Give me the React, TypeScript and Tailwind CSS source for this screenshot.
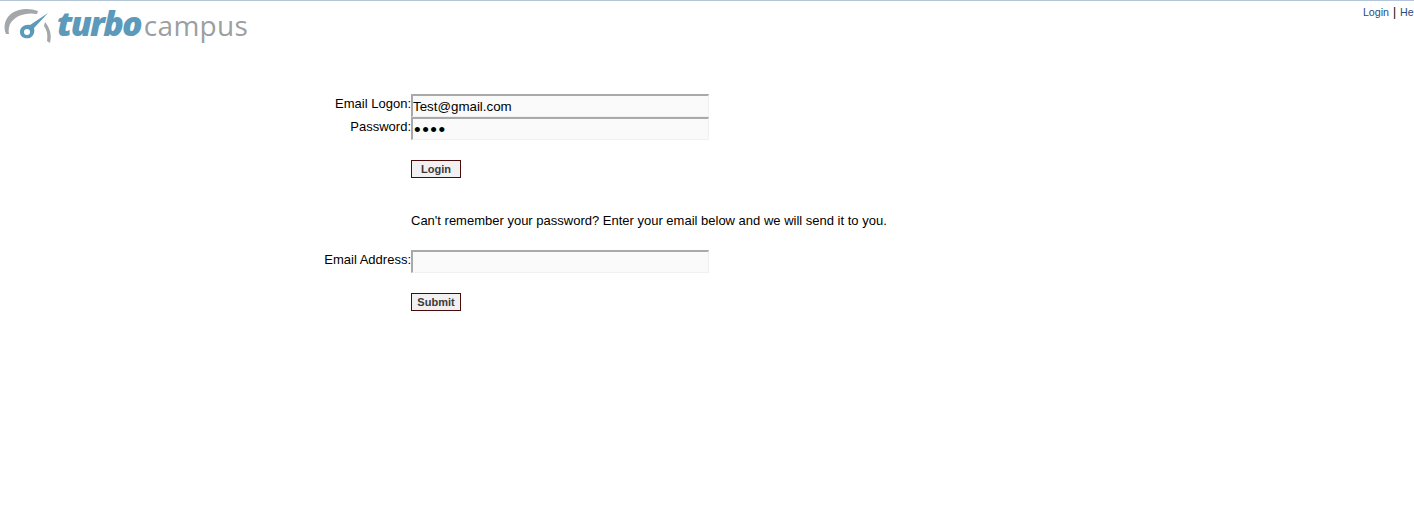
import React from "react";

const fieldClass =
  "w-[298px] h-[23px] bg-[#fafafa] border-t-2 border-l-2 border-r border-b border-t-[#a9a9a9] border-l-[#a9a9a9] border-r-[#f0f0f0] border-b-[#f0f0f0] px-0 text-[13.33px] text-black outline-none";
const buttonClass =
  "block w-[50px] h-[18px] bg-[#f2f0f0] border border-[#4a0a0a] text-[11px] font-bold text-[#3a3a3a] leading-none";
const labelClass = "text-right text-[13px] text-black leading-[15px] pt-[2px]";

const Logo = () => (
  <div className="flex items-start">
    <svg width="57" height="44" viewBox="0 1 57 44" fill="none" className="shrink-0">
      {/* gauge rim */}
      <path d="M6 34 C2 24 7 13 19 10 C26 8 32 9 38 11 L37 14 C27 12 15 15 10 24 C9 27 8 31 9 34 Z" fill="#a3a7aa" />
      <path d="M45 22 C50 28 52 35 50 43 L47 41 C48 35 47 30 44 26 Z" fill="#a3a7aa" />
      {/* needle and hub */}
      <path d="M48 13 L30 25 C25 24 20 27 20 32 C20 38 26 39 30 38 C34 36 35 31 34 28 Z" fill="#5b9aba" />
      <circle cx="27" cy="32" r="3" fill="#ffffff" />
    </svg>
    <div className="flex items-baseline font-['Open_Sans',sans-serif] leading-[44px]">
      <span className="text-[34px] font-extrabold italic text-[#5b9aba] tracking-[-1.8px]">turbo</span>
      <span className="ml-[3px] text-[28px] font-medium text-[#9b9fa2] tracking-[0.3px]">campus</span>
    </div>
  </div>
);

export default function App() {
  return (
    <div className="h-[512px] overflow-hidden bg-white border-t border-[#b3c5d6] font-['Liberation_Sans',Arial,sans-serif]">
      <div className="flex justify-between overflow-hidden h-[93px]">
        <Logo />
        <div className="mr-[-8px] pt-[4px] text-[10.67px] leading-[14px] text-[#2a4a80] whitespace-nowrap">
          <a href="#">Login</a>
          <span className="mx-[4px] text-black text-[12px]">|</span>
          <a href="#">Help</a>
        </div>
      </div>
      <form className="grid grid-cols-[411px_298px] items-start">
        <label className={labelClass}>Email Logon:</label>
        <input className={fieldClass} defaultValue="Test@gmail.com" />
        <label className={labelClass}>Password:</label>
        <input className={`${fieldClass} text-[19px] tracking-[1.5px] pl-px pt-[3px]`} type="password" defaultValue="test" />
        <div className="col-start-2 pt-[20px]">
          <button type="button" className={buttonClass}>Login</button>
        </div>
        <p className="col-start-2 w-[600px] pt-[35px] text-[13px] leading-[15px] text-black">
          Can't remember your password? Enter your email below and we will send it to you.
        </p>
        <label className={`${labelClass} mt-[22px]`}>Email Address:</label>
        <input className={`${fieldClass} mt-[22px]`} />
        <div className="col-start-2 pt-[20px]">
          <button type="button" className={buttonClass}>Submit</button>
        </div>
      </form>
    </div>
  );
}
